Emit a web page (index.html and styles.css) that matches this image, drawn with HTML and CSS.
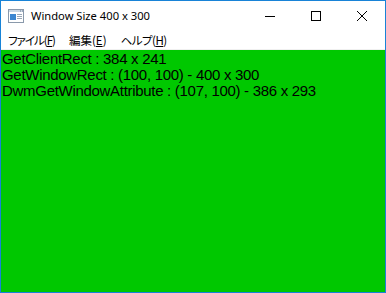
FILE: index.html
```html
<!DOCTYPE html>
<html lang="ja">
<head>
  <meta charset="UTF-8">
  <title>Window Size 400 x 300</title>
  <link rel="stylesheet" href="styles.css">
</head>
<body>
  <div class="window">
    <div class="titlebar">
      <div class="app-icon">
        <svg width="16" height="16" viewBox="0 0 16 16">
          <rect x="0.5" y="1.5" width="15" height="13" fill="#fff" stroke="#8a99ab"/>
          <rect x="1" y="2" width="14" height="2" fill="#c9d6e4"/>
          <rect x="2" y="6" width="6" height="6" fill="#3c86d0"/>
          <rect x="9" y="6" width="5" height="1" fill="#9aa8b8"/>
          <rect x="9" y="8" width="5" height="1" fill="#9aa8b8"/>
          <rect x="9" y="10" width="5" height="1" fill="#9aa8b8"/>
          <rect x="12" y="2.5" width="1" height="1" fill="#6a7b8f"/>
          <rect x="14" y="2.5" width="1" height="1" fill="#6a7b8f"/>
        </svg>
      </div>
      <div class="title">Window Size 400 x 300</div>
      <div class="caption-btn">
        <svg width="10" height="10" viewBox="0 0 10 10"><path d="M0 5.5H10" stroke="#000" stroke-width="1"/></svg>
      </div>
      <div class="caption-btn">
        <svg width="10" height="10" viewBox="0 0 10 10"><rect x="0.5" y="0.5" width="9" height="9" fill="none" stroke="#000"/></svg>
      </div>
      <div class="caption-btn">
        <svg width="10" height="10" viewBox="0 0 10 10"><path d="M0 0L10 10M10 0L0 10" stroke="#000" stroke-width="1"/></svg>
      </div>
    </div>
    <div class="menubar">
      <span class="menu-item tight">ファイル(<u>F</u>)</span>
      <span class="menu-item">編集(<u>E</u>)</span>
      <span class="menu-item semi">ヘルプ(<u>H</u>)</span>
    </div>
    <div class="client">
      <p>GetClientRect : 384 x 241</p>
      <p>GetWindowRect : (100, 100) - 400 x 300</p>
      <p>DwmGetWindowAttribute : (107, 100) - 386 x 293</p>
    </div>
  </div>
</body>
</html>
```

FILE: styles.css
```css
html, body {
  margin: 0;
  padding: 0;
}
body {
  width: 386px;
  height: 293px;
  overflow: hidden;
  background-color: #fff;
}
.window {
  width: 386px;
  height: 293px;
  box-sizing: border-box;
  border: 1px solid #1883d7;
  display: flex;
  flex-direction: column;
  background-color: #fff;
}
.titlebar {
  height: 29px;
  display: flex;
  align-items: center;
  background-color: #fff;
}
.app-icon {
  width: 16px;
  height: 16px;
  margin-left: 7px;
  margin-top: 1px;
}
.title {
  flex: 1;
  margin-left: 7px;
  font-family: "Noto Sans", "Open Sans", sans-serif;
  font-size: 11.2px;
  color: #000;
}
.caption-btn {
  width: 46px;
  height: 29px;
  display: flex;
  align-items: center;
  justify-content: center;
}
.caption-btn svg {
  display: block;
}
.menubar {
  height: 19px;
  display: flex;
  align-items: center;
  padding-left: 7px;
  gap: 14px;
  border-bottom: 1px solid #f0f0f0;
  font-family: "Noto Sans CJK JP", sans-serif;
  font-size: 11.5px;
  font-feature-settings: "palt";
  color: #000;
}
.menu-item.tight {
  letter-spacing: -1px;
}
.menu-item.semi {
  letter-spacing: -0.5px;
}
.menu-item u {
  text-underline-offset: 1px;
}
.client {
  flex: 1;
  background-color: #00c800;
  padding: 1px 0 0 1px;
  font-family: "Liberation Sans", sans-serif;
  font-size: 15px;
  letter-spacing: -0.3px;
  color: #000;
}
.client p {
  margin: 0;
  line-height: 16px;
}
```
